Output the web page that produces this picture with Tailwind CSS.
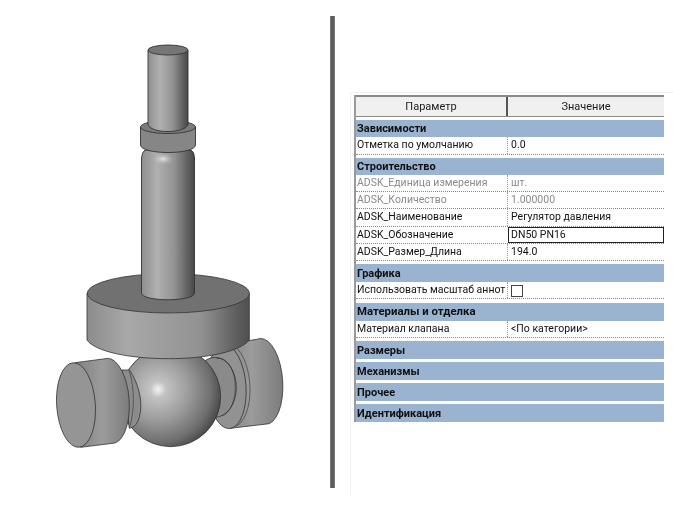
<!DOCTYPE html>
<html lang="ru">
<head>
<meta charset="utf-8">
<script src="https://cdn.jsdelivr.net/npm/@tailwindcss/browser@4"></script>
</head>
<body class="bg-white">
<div class="flex w-[673px] h-[505px] overflow-hidden bg-white font-['Roboto','Open_Sans',sans-serif] text-[10.5px] leading-none text-[#111]">
  <svg class="w-[330px] h-[505px] shrink-0 blur-[0.3px]" viewBox="0 0 330 505" fill="none">
    <defs>
      <linearGradient id="c"><stop offset="0" stop-color="#8f8f8f"/><stop offset=".3" stop-color="#b0b0b0"/><stop offset=".62" stop-color="#929292"/><stop offset=".9" stop-color="#5a5a5a"/><stop offset="1" stop-color="#484848"/></linearGradient>
      <linearGradient id="f"><stop offset="0" stop-color="#8c8c8c"/><stop offset=".25" stop-color="#a8a8a8"/><stop offset=".7" stop-color="#929292"/><stop offset=".93" stop-color="#5c5c5c"/><stop offset="1" stop-color="#505050"/></linearGradient>
      <linearGradient id="p" x1="0" x2="1" y1="0" y2="0"><stop offset="0" stop-color="#808080"/><stop offset=".5" stop-color="#9c9c9c"/><stop offset="1" stop-color="#7c7c7c"/></linearGradient>
      <radialGradient id="b" gradientUnits="userSpaceOnUse" cx="354" cy="388" r="205"><stop offset="0" stop-color="#f4f4f4"/><stop offset=".12" stop-color="#c2c2c2"/><stop offset=".45" stop-color="#9c9c9c"/><stop offset=".78" stop-color="#6e6e6e"/><stop offset="1" stop-color="#3c3c3c"/></radialGradient>
      <radialGradient id="h" cx=".5" cy=".5" r=".5"><stop offset="0" stop-color="#e6e6e6"/><stop offset="1" stop-color="#b0b0b0" stop-opacity="0"/></radialGradient>
    </defs>
    <g transform="translate(40 260) scale(.33333)" stroke="#333" stroke-width="2.4" stroke-linejoin="round">
      <path d="M540 256 L650 238 A58 127 -4 0 1 688 491 L570 505 Z" fill="url(#p)"/>
      <ellipse cx="560" cy="380" rx="58" ry="126" transform="rotate(-4 560 380)" fill="#929292"/>
      <path d="M545 254 A62 126 -4 0 1 590 498" stroke-width="1.800"/>
      <ellipse cx="525" cy="382" rx="64" ry="90" fill="#8a8a8a"/>
      <path d="M530 296 A48 86 0 0 1 545 468" stroke-width="1.800"/>
      <circle cx="392" cy="410" r="150" fill="url(#b)"/>
      <path d="M245 330 L268 330 C296 370 312 430 296 478 C290 495 280 502 268 505 Z" fill="#8c8c8c"/>
      <path d="M268 334 C284 380 284 460 268 503" stroke-width="1.800"/>
      <path d="M105 308 L205 295 A58 128 -4 0 1 225 549 L122 562 Z" fill="url(#p)"/>
      <ellipse cx="108" cy="435" rx="58" ry="127" transform="rotate(-4 108 435)" fill="#959595"/>
      <path d="M141 100 L141 240 C165 275 270 296 385 296 C500 296 600 275 628 240 L628 100 Z" fill="url(#f)"/>
      <ellipse cx="385" cy="100" rx="243" ry="59" fill="#717171"/>
    </g>
    <g stroke="#333" stroke-width=".9" stroke-linejoin="round">
      <path d="M141.500 158 Q142 152 145 150 L191 150 Q194.500 152 194.500 158 L194.500 293 C194.500 302 141.500 302 141.500 293 Z" fill="url(#c)"/>
      <path d="M140.500 127 L140.500 145 C141 155 195 155 195.500 145 L195.500 127 Z" fill="#868686"/>
      <ellipse cx="168" cy="127" rx="27.500" ry="6.500" fill="#7b7b7b"/>
      <path d="M148 50 L148 124 C149 134 187 134 188 124 L188 50 Z" fill="url(#c)"/>
      <ellipse cx="168" cy="50" rx="20" ry="5" fill="#767676"/>
    </g>
    <ellipse cx="163" cy="159" rx="11" ry="6" fill="url(#h)"/>
  </svg>
  <div class="w-[5px] h-[472px] mt-[16px] shrink-0 bg-[#5c5c5c] border-x border-[#777]"></div>
  <div class="ml-[15px] mt-[92px] h-[403px] w-[323px] border-l border-t border-[#f1f1f1] pt-[2px] pl-[3px] shrink-0">
    <div class="w-[310px] border-l-2 border-[#9a9a9a] blur-[0.35px]">
      <div class="flex h-[22px] items-center text-center bg-[#f0f0f0] border-t-2 border-b border-[#8a8a8a] text-[11px] text-[#222]">
        <div class="w-[152px] border-r-2 h-full flex items-center justify-center border-[#555]">Параметр</div>
        <div class="flex-1">Значение</div>
      </div>

      <div class="mt-[3px] h-[17px] flex items-center pl-[1px] bg-[#9ab3d1] font-bold text-[11px]">Зависимости</div>
      <div class="flex h-[18px] items-center border-b border-dotted border-[#888]"><div class="w-[152px] h-full flex items-center pl-[1px] border-r border-dotted border-[#999]">Отметка по умолчанию</div><div class="pl-[3px]">0.0</div></div>

      <div class="mt-[3px] h-[17px] flex items-center pl-[1px] bg-[#9ab3d1] font-bold text-[11px]">Строительство</div>
      <div class="flex h-[17px] items-center border-b border-dotted border-[#888] text-[#8a8a8a]"><div class="w-[152px] h-full flex items-center pl-[1px] border-r border-dotted border-[#999]">ADSK_Единица измерения</div><div class="pl-[3px]">шт.</div></div>
      <div class="flex h-[17px] items-center border-b border-dotted border-[#888] text-[#8a8a8a]"><div class="w-[152px] h-full flex items-center pl-[1px] border-r border-dotted border-[#999]">ADSK_Количество</div><div class="pl-[3px]">1.000000</div></div>
      <div class="flex h-[18px] items-center border-b border-dotted border-[#888]"><div class="w-[152px] h-full flex items-center pl-[1px] border-r border-dotted border-[#999]">ADSK_Наименование</div><div class="pl-[3px]">Регулятор давления</div></div>
      <div class="flex h-[17px] items-center border-b border-dotted border-[#888]"><div class="w-[152px] h-full flex items-center pl-[1px]">ADSK_Обозначение</div><div class="flex-1 h-full flex items-center pl-[2px] border border-[#222]">DN50 PN16</div></div>
      <div class="flex h-[17px] items-center border-b border-dotted border-[#888]"><div class="w-[152px] h-full flex items-center pl-[1px] border-r border-dotted border-[#999]">ADSK_Размер_Длина</div><div class="pl-[3px]">194.0</div></div>

      <div class="mt-[3px] h-[18px] flex items-center pl-[1px] bg-[#9ab3d1] font-bold text-[11px]">Графика</div>
      <div class="flex h-[17px] items-center border-b border-dotted border-[#888]"><div class="w-[152px] h-full flex items-center pl-[1px] border-r border-dotted border-[#999] whitespace-nowrap">Использовать масштаб аннот</div><div class="ml-[3px] w-[12px] h-[12px] mt-[1px] border border-[#444] bg-white"></div></div>

      <div class="mt-[4px] h-[18px] flex items-center pl-[1px] bg-[#9ab3d1] font-bold text-[11.4px]">Материалы и отделка</div>
      <div class="flex h-[17px] items-center border-b border-dotted border-[#888]"><div class="w-[152px] h-full flex items-center pl-[1px] border-r border-dotted border-[#999]">Материал клапана</div><div class="pl-[3px]">&lt;По категории&gt;</div></div>

      <div class="mt-[3px] h-[18px] flex items-center pl-[1px] bg-[#9ab3d1] font-bold text-[11px]">Размеры</div>
      <div class="mt-[3px] h-[18px] flex items-center pl-[1px] bg-[#9ab3d1] font-bold text-[11px]">Механизмы</div>
      <div class="mt-[3px] h-[18px] flex items-center pl-[1px] bg-[#9ab3d1] font-bold text-[11px]">Прочее</div>
      <div class="mt-[3px] h-[18px] flex items-center pl-[1px] bg-[#9ab3d1] font-bold text-[11px]">Идентификация</div>
    </div>
  </div>
</div>
</body>
</html>
